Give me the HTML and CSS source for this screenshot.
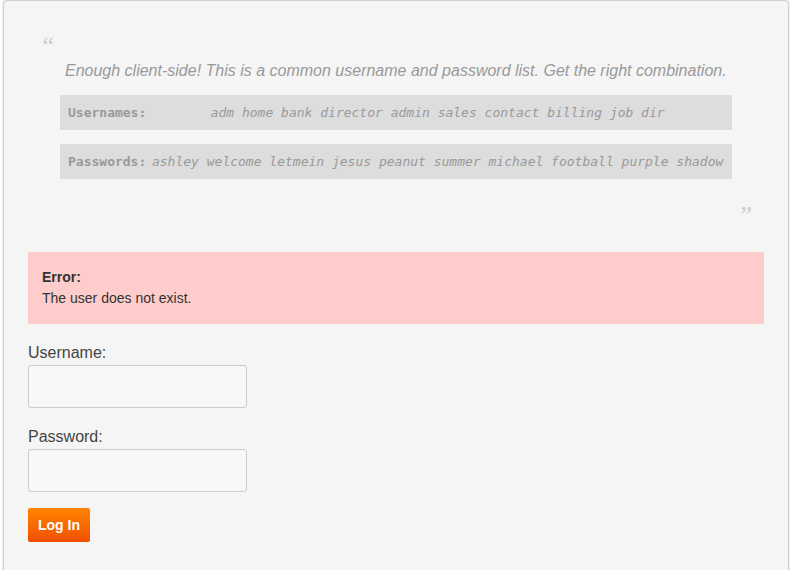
FILE: index.html
```html
<!DOCTYPE html>
<html>
<head>
<meta charset="utf-8">
<link rel="stylesheet" href="styles.css">
</head>
<body>
<div class="page">
  <blockquote class="quote">
    <div class="mark open">&ldquo;</div>
    <div class="quote-body">
      <p class="quote-text">Enough client-side! This is a common username and password list. Get the right combination.</p>
      <div class="list">
        <span class="list-label">Usernames:</span>
        <span class="list-items">adm home bank director admin sales contact billing job dir</span>
      </div>
      <div class="list">
        <span class="list-label">Passwords:</span>
        <span class="list-items">ashley welcome letmein jesus peanut summer michael football purple shadow</span>
      </div>
    </div>
    <div class="mark close">&rdquo;</div>
  </blockquote>

  <div class="error">
    <strong class="error-title">Error:</strong>
    <div class="error-text">The user does not exist.</div>
  </div>

  <form class="login">
    <label class="field-label" for="u">Username:</label>
    <input class="field" id="u" type="text">
    <label class="field-label" for="p">Password:</label>
    <input class="field" id="p" type="password">
    <button class="btn" type="button">Log In</button>
  </form>
</div>
</body>
</html>
```
FILE: styles.css
```css
html, body {
  margin: 0;
  padding: 0;
  background: #ffffff;
}
body {
  font-family: "Liberation Sans", Arial, sans-serif;
  color: #333;
}
.page {
  margin-left: 3px;
  width: 736px;
  min-height: 560px;
  background: #f5f5f5;
  border: 1px solid #cfcfcf;
  border-radius: 4px 4px 0 0;
  box-shadow: 0 0 2px rgba(0,0,0,0.18);
  padding: 0 24px 24px 24px;
}
.quote {
  margin: 35px 12px 0 12px;
  padding: 0;
}
.mark {
  font-family: "Liberation Serif", serif;
  font-style: italic;
  font-size: 26px;
  line-height: 20px;
  height: 20px;
  color: #cccccc;
}
.mark.close {
  text-align: right;
  margin-top: 27px;
  padding-right: 0;
}
.quote-body {
  padding: 0 20px;
}
.quote-text {
  margin: 5px 0 14px 0;
  padding-left: 5px;
  font-size: 16px;
  line-height: 20px;
  font-style: italic;
  color: #999999;
}
.list {
  display: flex;
  align-items: center;
  background: #dddddd;
  padding: 10px 8px;
  margin-bottom: 14px;
  font-family: "DejaVu Sans Mono", monospace;
  font-size: 13px;
  line-height: 15px;
  color: #999999;
}
.list:last-child { margin-bottom: 0; }
.list-label {
  font-weight: bold;
  flex: 0 0 auto;
  margin-right: 5px;
}
.list-items {
  flex: 1 1 auto;
  font-style: italic;
  text-align: center;
  white-space: nowrap;
}
.error {
  margin-top: 26px;
  background: #ffcccc;
  padding: 15px 14px 15px 14px;
  font-size: 14px;
  line-height: 21px;
  color: #333;
}
.error-title {
  display: block;
  font-weight: bold;
}
.login {
  display: flex;
  flex-direction: column;
  align-items: flex-start;
  padding-top: 19px;
}
.field-label {
  font-size: 16px;
  line-height: 20px;
  color: #444;
  margin-bottom: 2px;
}
.field {
  box-sizing: border-box;
  width: 219px;
  height: 43px;
  background: #f8f8f8;
  border: 1px solid #cccccc;
  border-radius: 3px;
  margin: 0 0 19px 0;
}
.btn {
  margin-top: -3px;
  height: 34px;
  padding: 0 10px;
  border: none;
  border-radius: 2px;
  background: linear-gradient(#ff8400, #f05000);
  color: #fff;
  font-family: "Liberation Sans", Arial, sans-serif;
  font-weight: bold;
  font-size: 14px;
}
```
